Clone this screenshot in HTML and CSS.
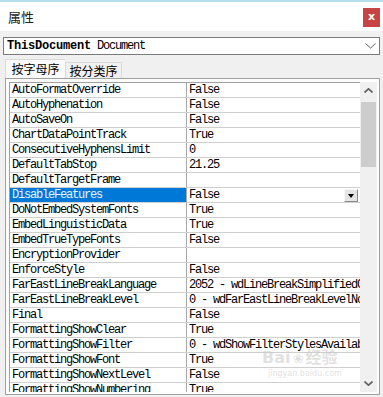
FILE: index.html
```html
<!DOCTYPE html>
<html lang="zh-CN">
<head>
  <meta charset="UTF-8">
  <title>属性</title>
  <link rel="stylesheet" href="styles.css">
</head>
<body>
  <div class="titlebar">
    <span class="title">属性</span>
    <div class="close">x</div>
  </div>

  <div class="objbox">
    <span class="objname"><b>ThisDocument</b> Document</span>
    <svg class="chevron" width="11" height="6" viewBox="0 0 11 6"><polyline points="0.5,0.5 5.5,5 10.5,0.5" fill="none" stroke="#606060" stroke-width="1"/></svg>
  </div>

  <div class="tabs">
    <div class="tab active">按字母序</div>
    <div class="tab">按分类序</div>
  </div>

  <div class="panel">
    <div class="grid">
      <div class="row"><div class="name">AutoFormatOverride</div><div class="val">False</div></div>
      <div class="row"><div class="name">AutoHyphenation</div><div class="val">False</div></div>
      <div class="row"><div class="name">AutoSaveOn</div><div class="val">False</div></div>
      <div class="row"><div class="name">ChartDataPointTrack</div><div class="val">True</div></div>
      <div class="row"><div class="name">ConsecutiveHyphensLimit</div><div class="val">0</div></div>
      <div class="row"><div class="name">DefaultTabStop</div><div class="val">21.25</div></div>
      <div class="row"><div class="name">DefaultTargetFrame</div><div class="val"></div></div>
      <div class="row selected"><div class="name">DisableFeatures</div><div class="val"><span>False</span><span class="drop"></span></div></div>
      <div class="row"><div class="name">DoNotEmbedSystemFonts</div><div class="val">True</div></div>
      <div class="row"><div class="name">EmbedLinguisticData</div><div class="val">True</div></div>
      <div class="row"><div class="name">EmbedTrueTypeFonts</div><div class="val">False</div></div>
      <div class="row"><div class="name">EncryptionProvider</div><div class="val"></div></div>
      <div class="row"><div class="name">EnforceStyle</div><div class="val">False</div></div>
      <div class="row"><div class="name">FarEastLineBreakLanguage</div><div class="val">2052 - wdLineBreakSimplifiedChinese</div></div>
      <div class="row"><div class="name">FarEastLineBreakLevel</div><div class="val">0 - wdFarEastLineBreakLevelNormal</div></div>
      <div class="row"><div class="name">Final</div><div class="val">False</div></div>
      <div class="row"><div class="name">FormattingShowClear</div><div class="val">True</div></div>
      <div class="row"><div class="name">FormattingShowFilter</div><div class="val">0 - wdShowFilterStylesAvailable</div></div>
      <div class="row"><div class="name">FormattingShowFont</div><div class="val">True</div></div>
      <div class="row"><div class="name">FormattingShowNextLevel</div><div class="val">False</div></div>
      <div class="row"><div class="name">FormattingShowNumbering</div><div class="val">True</div></div>
    </div>
    <div class="vscroll">
      <div class="arrow">
        <svg width="9" height="5" viewBox="0 0 9 5"><polyline points="0.5,4.5 4.5,0.8 8.5,4.5" fill="none" stroke="#606060" stroke-width="1.6"/></svg>
      </div>
      <div class="thumb"></div>
      <div class="track"></div>
      <div class="arrow">
        <svg width="9" height="5" viewBox="0 0 9 5"><polyline points="0.5,0.5 4.5,4.2 8.5,0.5" fill="none" stroke="#606060" stroke-width="1.6"/></svg>
      </div>
    </div>
  </div>

  <div class="watermark">
    <div class="wm-logo">Bai<span class="paw">❀</span>经验</div>
    <div class="wm-url">jingyan.baidu.com</div>
  </div>
</body>
</html>
```

FILE: styles.css
```css
body {
  margin: 0;
  width: 383px;
  height: 397px;
  overflow: hidden;
  position: relative;
  background-color: #f0f0f0;
  font-family: "Noto Sans CJK SC", sans-serif;
  color: #000;
}
.titlebar {
  display: flex;
  justify-content: space-between;
  align-items: center;
  height: 29px;
  padding: 0 3px 0 8px;
  border-top: 2px solid #b5def0;
  background-color: #fff;
}
.title {
  font-size: 13px;
  color: #222;
}
.close {
  width: 17px;
  height: 19px;
  margin-top: 2px;
  background-color: #c74444;
  color: #fff;
  font-family: "DejaVu Sans", sans-serif;
  font-size: 11px;
  font-weight: bold;
  line-height: 18px;
  text-align: center;
}
.objbox {
  display: flex;
  justify-content: space-between;
  align-items: center;
  box-sizing: border-box;
  height: 18px;
  margin: 6px 3px 0 3px;
  padding: 0 3px 0 3px;
  border: 1px solid #7a7a7a;
  background-color: #fff;
}
.objname {
  font-family: "Liberation Mono", monospace;
  font-size: 12px;
  letter-spacing: -1.2px;
  line-height: 16px;
}
.objname b {
  letter-spacing: -0.2px;
}
.tabs {
  display: flex;
  align-items: flex-end;
  height: 19px;
  margin-top: 4px;
  padding-left: 5px;
}
.tab {
  box-sizing: border-box;
  height: 16px;
  width: 57px;
  border: 1px solid #d9d9d9;
  border-bottom: none;
  background-color: #f0f0f0;
  font-size: 12px;
  line-height: 15px;
  text-align: center;
}
.tab.active {
  height: 19px;
  width: 60px;
  background-color: #fafafa;
  border-right: none;
  line-height: 18px;
}
.panel {
  display: flex;
  box-sizing: border-box;
  height: 317px;
  margin: 0 3px 0 5px;
  padding: 3px 2px 2px 3px;
  border: 1px solid #a0a0a0;
  background-color: #fcfcfc;
}
.grid {
  flex: 1;
  overflow: hidden;
  border-top: 1px solid #a0a0a0;
  border-left: 1px solid #a0a0a0;
  background-color: #fff;
  font-family: "Liberation Mono", monospace;
  font-size: 12px;
  letter-spacing: -1.2px;
}
.row {
  display: flex;
  height: 15px;
  box-sizing: border-box;
  border-bottom: 1px solid #cfcfcf;
  line-height: 14px;
}
.name {
  width: 177px;
  padding-left: 2px;
  box-sizing: border-box;
  border-right: 1px solid #a8a8a8;
  white-space: nowrap;
  overflow: hidden;
}
.val {
  flex: 1;
  padding-left: 2px;
  white-space: nowrap;
  overflow: hidden;
}
.row.selected .name {
  background-color: #0078d7;
  color: #e8f4ff;
}
.row.selected .val {
  display: flex;
  justify-content: space-between;
  align-items: center;
  padding-right: 2px;
}
.drop {
  position: relative;
  box-sizing: border-box;
  width: 14px;
  height: 13px;
  background-color: #e4e4e4;
  border: 1px solid;
  border-color: #f8f8f8 #8a8a8a #8a8a8a #f8f8f8;
}
.drop::after {
  content: "";
  position: absolute;
  left: 3px;
  top: 4px;
  border-left: 3.5px solid transparent;
  border-right: 3.5px solid transparent;
  border-top: 4px solid #000;
}
.vscroll {
  display: flex;
  flex-direction: column;
  width: 17px;
  background-color: #f0f0f0;
}
.arrow {
  display: flex;
  justify-content: center;
  align-items: center;
  height: 17px;
}
.thumb {
  height: 65px;
  margin: 3px 1px 0 1px;
  background-color: #cdcdcd;
}
.track {
  flex: 1;
}
.watermark {
  position: absolute;
  left: 262px;
  top: 348px;
  color: rgba(200, 200, 200, 0.55);
  pointer-events: none;
}
.wm-logo {
  font-family: "DejaVu Sans", "Noto Sans CJK SC", sans-serif;
  font-size: 16px;
  font-weight: bold;
  line-height: 20px;
}
.paw {
  font-size: 13px;
  margin: 0 2px;
}
.wm-url {
  font-family: "DejaVu Sans", sans-serif;
  font-size: 8px;
  margin-left: 6px;
}
```
